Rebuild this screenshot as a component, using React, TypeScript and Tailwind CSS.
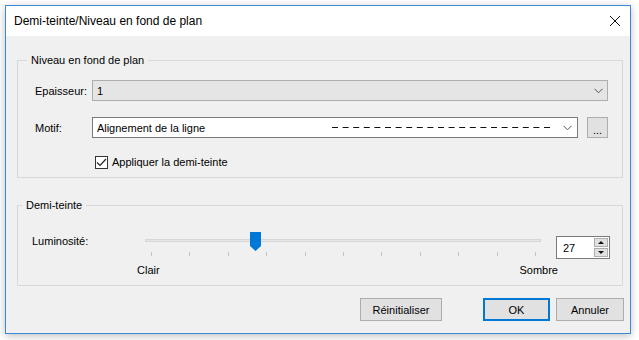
import React from "react";

const font = { fontFamily: "'Liberation Sans', Arial, sans-serif" };

function Chevron() {
  return (
    <svg width="9" height="6" viewBox="0 0 9 6" className="shrink-0">
      <path d="M0.5 0.8 L4.5 4.8 L8.5 0.8" fill="none" stroke="#555" strokeWidth="1" />
    </svg>
  );
}

function Slider({ value }: { value: number }) {
  const ticks = Array.from({ length: 11 }, (_, i) => i);
  const left = 6 + (value / 100) * 384 - 5;
  return (
    <div className="relative h-[27px] w-[396px]">
      <div className="absolute left-0 right-0 top-[8px] h-[3px] border border-[#d6d6d6] bg-[#e7e7e7]" />
      <svg
        className="absolute top-[1px]"
        style={{ left }}
        width="11"
        height="19"
        viewBox="0 0 11 19"
      >
        <path d="M0 0 H11 V14 L5.5 19 L0 14 Z" fill="#0078d7" />
      </svg>
      <div className="absolute left-[6px] right-[5px] top-[21px] flex justify-between">
        {ticks.map((t) => (
          <div key={t} className="h-[4px] w-px bg-[#c4c4c4]" />
        ))}
      </div>
    </div>
  );
}

export default function App() {
  return (
    <div className="h-[340px] w-[639px] bg-white pl-[5px] pt-[5px] text-[11px] text-black" style={font}>
      <div className="flex h-[329px] w-[626px] flex-col border border-[#3c8ad6] bg-[#f0f0f0] shadow-[0_2px_8px_rgba(0,0,0,0.25)]">
        {/* title bar */}
        <div className="flex h-[30px] items-center justify-between bg-white pl-[8px] pr-[10px]">
          <span className="text-[12px] leading-[16px]">Demi-teinte/Niveau en fond de plan</span>
          <svg width="10" height="10" viewBox="0 0 10 10">
            <path d="M0 0 L10 10 M10 0 L0 10" stroke="#111" strokeWidth="1" />
          </svg>
        </div>

        {/* Niveau en fond de plan */}
        <div className="relative ml-[11px] mt-[24px] w-[606px] border border-[#d9d9d9] pb-[7px] pl-[17px] pr-[14px] pt-[19px]">
          <span className="absolute left-[9px] top-[-9px] bg-[#f0f0f0] px-[4px] leading-[16px]">
            Niveau en fond de plan
          </span>
          <div className="flex items-center">
            <span className="w-[57px] leading-[16px]">Epaisseur:</span>
            <div className="flex h-[21px] flex-1 items-center justify-between border border-[#adadad] bg-[#e5e5e5] pl-[4px] pr-[4px]">
              <span className="leading-[16px]">1</span>
              <Chevron />
            </div>
          </div>
          <div className="mt-[16px] flex items-center">
            <span className="w-[57px] leading-[16px]">Motif:</span>
            <div className="flex h-[21px] w-[487px] items-center border border-[#7a7a7a] bg-white pl-[4px] pr-[5px]">
              <span className="w-[235px] leading-[16px]">Alignement de la ligne</span>
              <svg width="222" height="3" viewBox="0 0 222 3" className="shrink-0">
                <line x1="0" y1="1.5" x2="222" y2="1.5" stroke="#111" strokeWidth="1" strokeDasharray="6 4.6" />
              </svg>
              <div className="flex flex-1 justify-end">
                <Chevron />
              </div>
            </div>
            <div className="ml-[9px] flex h-[21px] w-[21px] items-end justify-center border border-[#adadad] bg-[#e1e1e1] pb-[3px] leading-[8px]">
              ...
            </div>
          </div>
          <div className="mt-[16px] flex h-[16px] items-center pl-[60px]">
            <div className="flex h-[13px] w-[13px] items-center justify-center border border-[#333] bg-white">
              <svg width="11" height="9" viewBox="0 0 11 9">
                <path d="M1 4.5 L4 7.5 L10 1" fill="none" stroke="#222" strokeWidth="1.2" />
              </svg>
            </div>
            <span className="ml-[4px] leading-[16px]">Appliquer la demi-teinte</span>
          </div>
        </div>

        {/* Demi-teinte */}
        <div className="relative ml-[11px] mt-[27px] w-[606px] border border-[#d9d9d9] pb-[7px] pl-[14px] pt-[25px]">
          <span className="absolute left-[4px] top-[-9px] bg-[#f0f0f0] px-[4px] leading-[16px]">Demi-teinte</span>
          <div className="flex items-start">
            <span className="mt-[2px] w-[113px] leading-[16px]">Luminosité:</span>
            <div className="flex w-[396px] flex-col">
              <Slider value={27} />
              <div className="mt-[4px] flex justify-between leading-[16px]">
                <span className="-ml-[8px]">Clair</span>
                <span className="-mr-[17px]">Sombre</span>
              </div>
            </div>
            <div className="ml-[15px] mt-[5px] flex h-[23px] w-[54px] items-center border border-[#7a7a7a] bg-white pl-[6px] pr-[1px]">
              <span className="flex-1 leading-[16px]">27</span>
              <div className="flex flex-col gap-[1px]">
                <div className="flex h-[9px] w-[14px] items-center justify-center border border-[#adadad] bg-[#e1e1e1]">
                  <svg width="6" height="3" viewBox="0 0 6 3">
                    <path d="M0 3 L3 0 L6 3 Z" fill="#111" />
                  </svg>
                </div>
                <div className="flex h-[9px] w-[14px] items-center justify-center border border-[#adadad] bg-[#e1e1e1]">
                  <svg width="6" height="3" viewBox="0 0 6 3">
                    <path d="M0 0 L3 3 L6 0 Z" fill="#111" />
                  </svg>
                </div>
              </div>
            </div>
          </div>
        </div>

        {/* buttons */}
        <div className="mt-[12px] flex justify-end pr-[6px]">
          <button className="flex h-[23px] w-[82px] items-center justify-center border border-[#adadad] bg-[#e1e1e1] leading-[16px]">
            Réinitialiser
          </button>
          <button className="ml-[41px] flex h-[23px] w-[67px] items-center justify-center border-2 border-[#0078d7] bg-[#e1e1e1] leading-[16px]">
            OK
          </button>
          <button className="ml-[6px] flex h-[23px] w-[68px] items-center justify-center border border-[#adadad] bg-[#e1e1e1] leading-[16px]">
            Annuler
          </button>
        </div>
      </div>
    </div>
  );
}
